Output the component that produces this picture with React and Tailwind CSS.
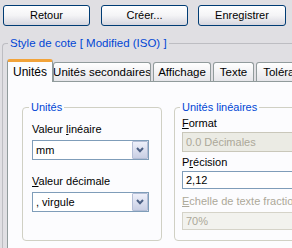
import React from 'react';

const XpButton = ({ children, w }) => (
  <button
    className={`${w} h-[21px] border border-[#003c74] rounded-[3px] bg-gradient-to-b from-white via-[#f4f4f6] to-[#d6d6de] text-[11px] leading-none text-black`}
  >
    {children}
  </button>
);

const Tab = ({ children, w, active }) =>
  active ? (
    <div
      className={`${w} shrink-0 h-[23px] -mb-px relative z-10 bg-[#fcfcfe] border-x border-[#919b9c] border-t-[3px] border-t-[#f2a33a] rounded-t-[3px] flex items-center justify-center pb-[1px] text-[12px] whitespace-nowrap`}
    >
      {children}
    </div>
  ) : (
    <div
      className={`${w} shrink-0 h-[19px] bg-gradient-to-b from-white to-[#e6e6ea] border border-b-0 border-[#919b9c] rounded-t-[3px] flex items-center justify-center pt-[1px] text-[11.5px] whitespace-nowrap overflow-hidden`}
    >
      {children}
    </div>
  );

const Chevron = () => (
  <svg width="8" height="6" viewBox="0 0 8 6">
    <path d="M1 1 L4 4.2 L7 1" fill="none" stroke="#4d6185" strokeWidth="2" />
  </svg>
);

const Combo = ({ value }) => (
  <div className="w-[117px] h-[20px] border border-[#7f9db9] bg-white flex items-center">
    <span className="flex-1 pl-[3px] leading-none">{value}</span>
    <div className="w-[16px] h-[18px] border border-[#b4bed6] rounded-[1px] bg-gradient-to-b from-[#eef0fa] to-[#c9cfe4] flex items-center justify-center">
      <Chevron />
    </div>
  </div>
);

export default function App() {
  return (
    <div
      className="w-[292px] h-[248px] overflow-hidden bg-[#e0dfe3] text-[11px] text-black"
      style={{ fontFamily: '"Liberation Sans", Arial, sans-serif' }}
    >
      <div className="flex pt-[5px] pl-[3px]">
        <XpButton w="w-[87px]">Retour</XpButton>
        <div className="w-[11px]" />
        <XpButton w="w-[87px]">Créer...</XpButton>
        <div className="w-[10px]" />
        <XpButton w="w-[88px]">Enregistrer</XpButton>
      </div>

      <fieldset className="mt-[10px] ml-[2px] w-[300px] h-[220px] border-l border-t border-[#bdbdc2] rounded-tl-[4px] pl-[4px]">
        <legend className="ml-[1px] px-[2px] leading-[14px] text-[11.5px] text-[#0046d5]">Style de cote [ Modified (ISO) ]</legend>

        <div className="mt-[9px] flex items-end h-[22px] w-[300px]">
          <Tab w="w-[46px]" active>Unités</Tab>
          <Tab w="w-[98px]">Unités secondaires</Tab>
          <div className="w-[2px] shrink-0" />
          <Tab w="w-[58px]">Affichage</Tab>
          <div className="w-[2px] shrink-0" />
          <Tab w="w-[41px]">Texte</Tab>
          <div className="w-[2px] shrink-0" />
          <Tab w="w-[70px]">Tolérances</Tab>
        </div>

        <div className="h-[180px] border border-[#919b9c] bg-[#fcfcfe] pl-[14px] pt-[18px] flex items-start gap-[12px]">
          <fieldset className="w-[140px] h-[141px] shrink-0 border border-[#d0d0c4] rounded-[4px] px-[9px]">
            <legend className="-ml-[3px] px-[2px] leading-[14px] text-[#0046d5]">Unités</legend>
            <div className="mt-[8px] leading-[14px]">
              Valeur <span className="underline">l</span>inéaire
            </div>
            <div className="mt-[4px]">
              <Combo value="mm" />
            </div>
            <div className="mt-[14px] leading-[14px]">
              <span className="underline">V</span>aleur décimale
            </div>
            <div className="mt-[4px]">
              <Combo value=", virgule" />
            </div>
          </fieldset>

          <fieldset className="w-[140px] h-[141px] shrink-0 border border-[#d0d0c4] rounded-[4px] px-[7px]">
            <legend className="-ml-[2px] px-[2px] leading-[14px] text-[#0046d5]">Unités linéaires</legend>
            <div className="mt-[2px] leading-[14px]">
              <span className="underline">F</span>ormat
            </div>
            <div className="mt-[2px] w-[130px] h-[20px] border border-[#c9c7ba] bg-[#ebebe4] flex items-center pl-[3px] text-[#aca899]">
              0.0 Décimales
            </div>
            <div className="mt-[3px] leading-[14px]">
              P<span className="underline">r</span>écision
            </div>
            <div className="mt-[2px] w-[130px] h-[18px] border border-[#7f9db9] bg-white flex items-center pl-[3px]">
              2,12
            </div>
            <div className="mt-[5px] leading-[14px] text-[#aca899] whitespace-nowrap">
              <span className="underline">E</span>chelle de texte fractionnaire
            </div>
            <div className="mt-[4px] w-[130px] h-[18px] border border-[#d5d3c8] bg-[#f2f2ee] flex items-center pl-[3px] text-[#aca899]">
              70%
            </div>
          </fieldset>
        </div>
      </fieldset>
    </div>
  );
}
